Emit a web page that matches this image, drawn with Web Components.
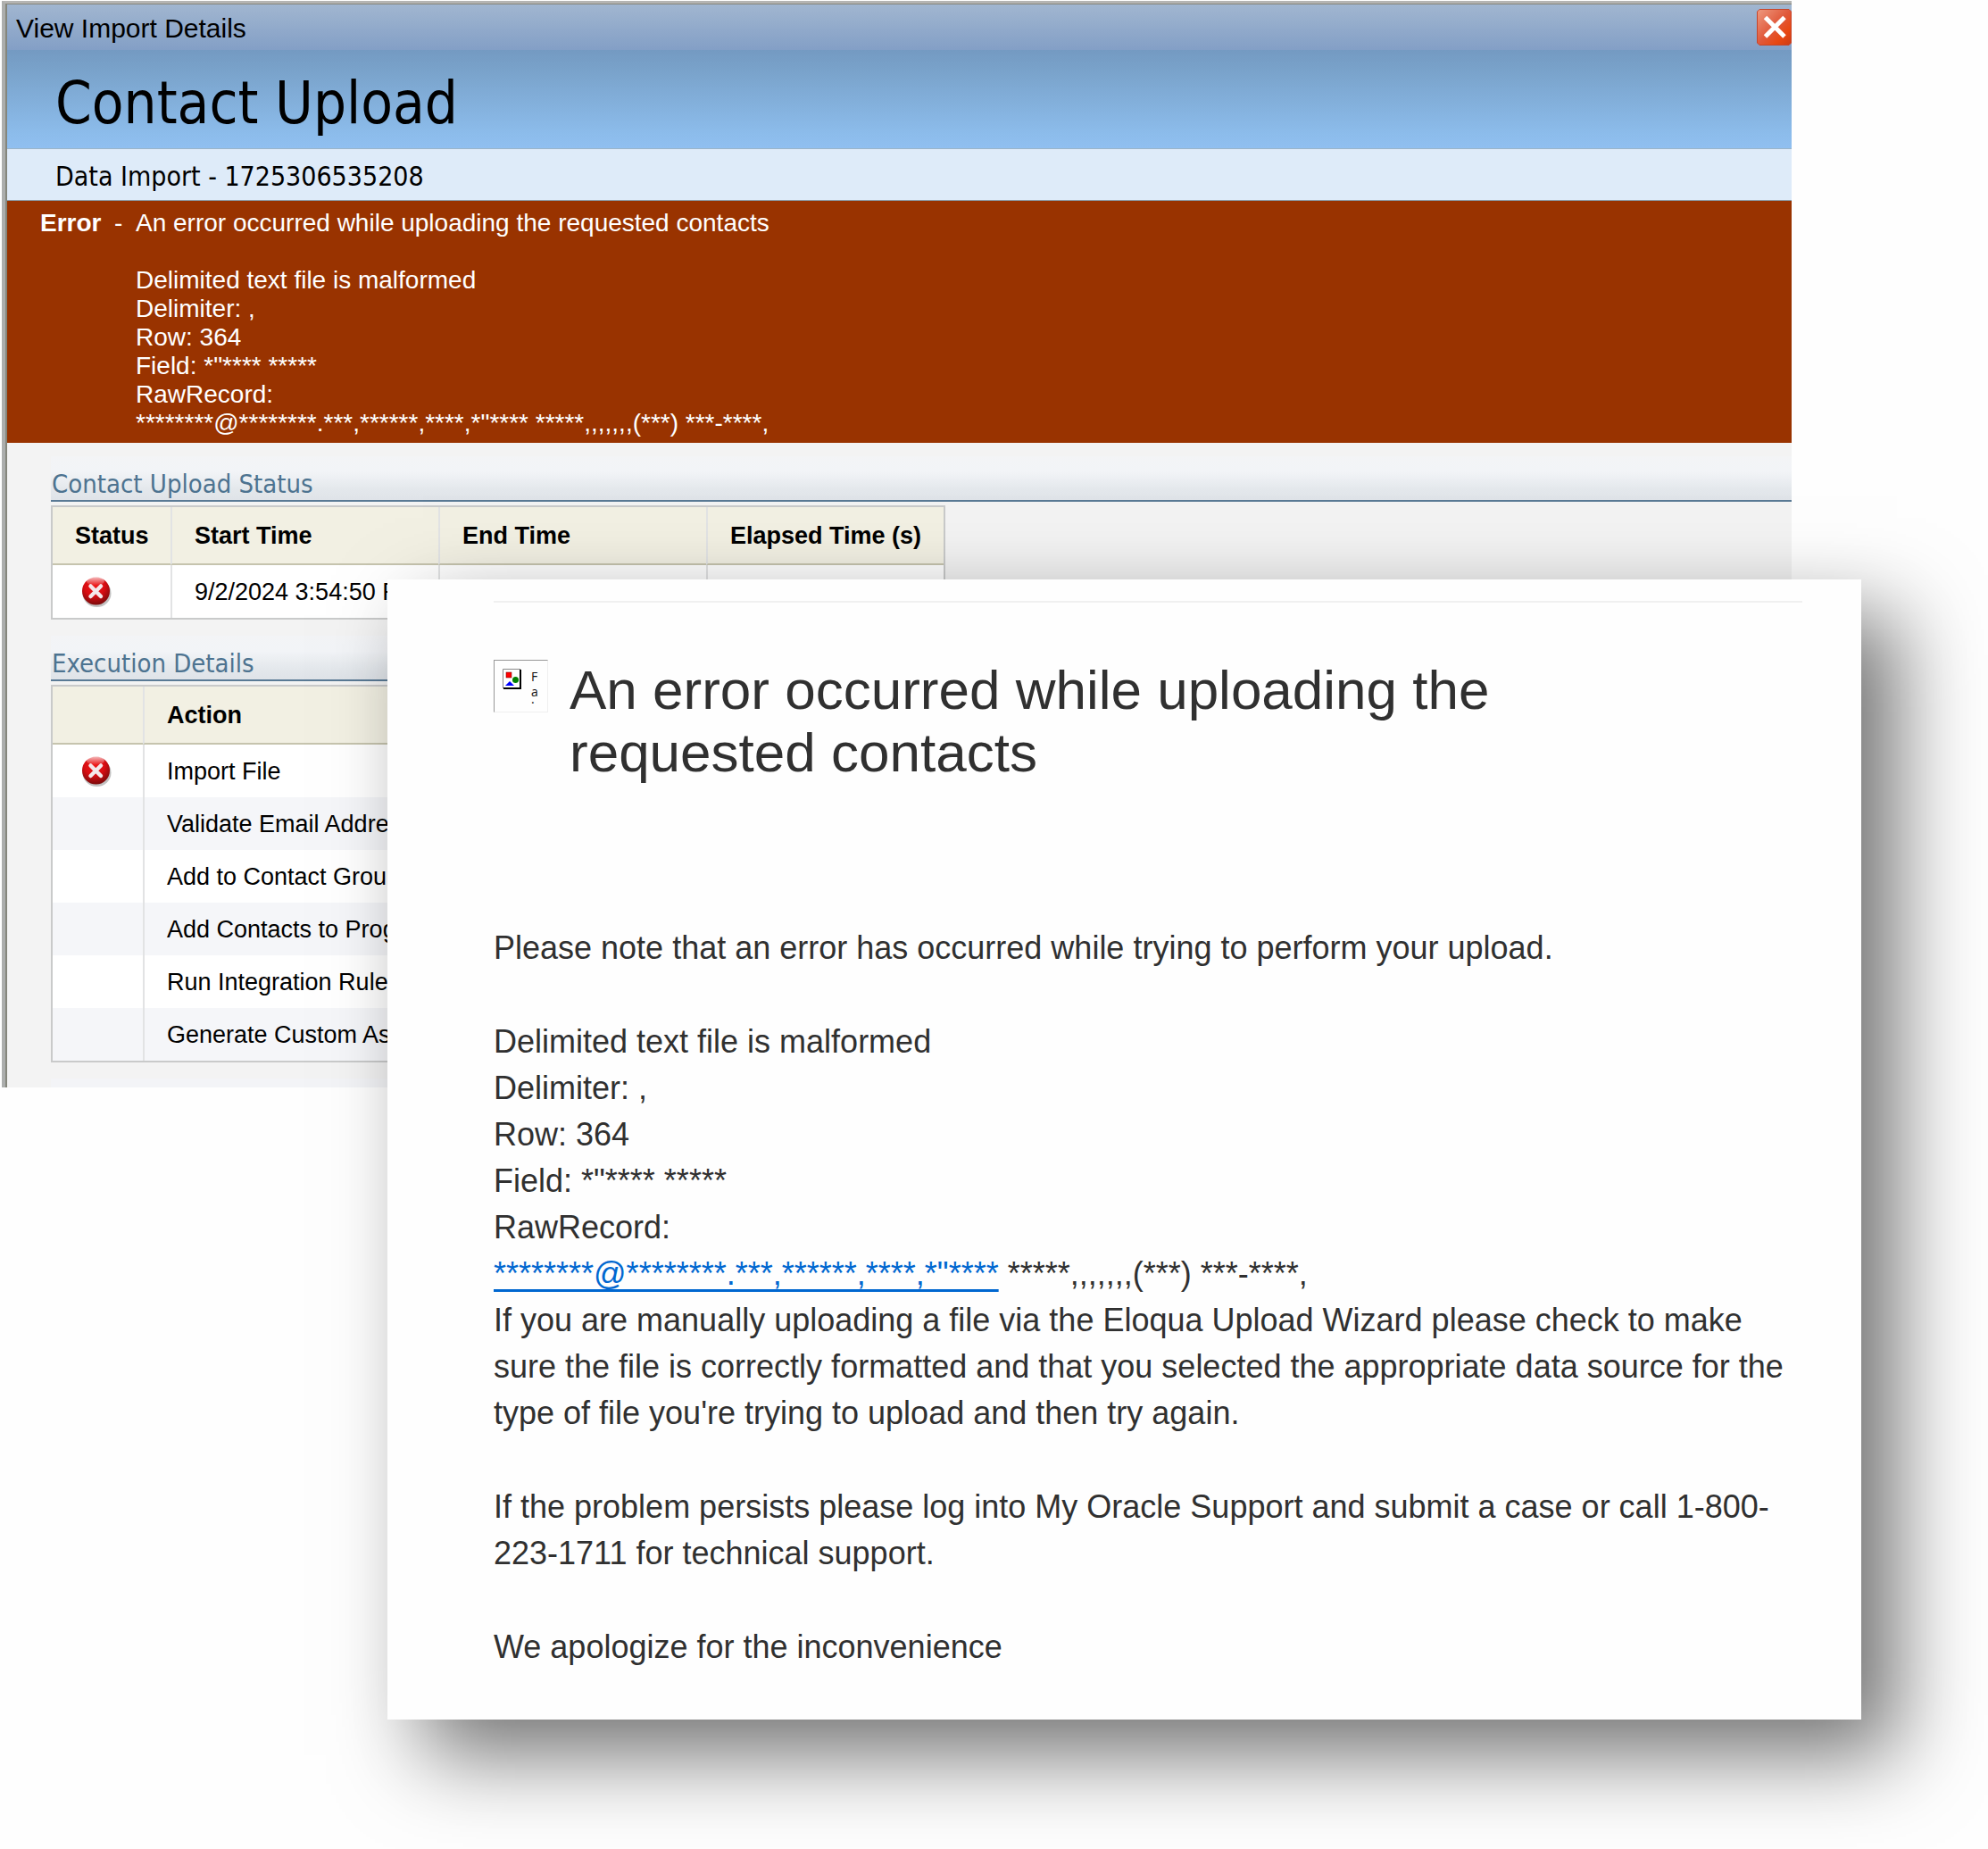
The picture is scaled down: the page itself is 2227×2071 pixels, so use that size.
<!DOCTYPE html>
<html lang="en">
<head>
<meta charset="utf-8">
<title>View Import Details</title>
<style>
  body { margin: 0; background: #fefefe; font-family: "Liberation Sans", Arial, sans-serif; color: #000; }
</style>
</head>
<body>
<import-page></import-page>

<template id="import-page">
  <style>
    :host { display: block; position: relative; min-height: 100vh; overflow: hidden; }
    import-dialog { margin: 1px 220px 0 2px; }
    error-card { position: absolute; top: 649px; left: 434px; right: 142px; }
  </style>
  <import-dialog>
    <span slot="title">View Import Details</span>
    <span slot="heading">Contact Upload</span>
    <span slot="name">Data Import - 1725306535208</span>
    <error-banner slot="banner"></error-banner>
    <section-block heading="Contact Upload Status"><status-table></status-table></section-block>
    <section-block heading="Execution Details"><action-table></action-table></section-block>
  </import-dialog>
  <error-card></error-card>
</template>

<template id="import-dialog">
  <style>
    :host { display: block; border-top: 3px solid #b4b4b2; border-left: 4px solid #acaead; }
    .frame { border-top: 1px solid #85847a; border-left: 2px solid #85867c; background: #f3f3f3; }
    .bar { display: flex; align-items: center; justify-content: space-between; height: 51px;
      padding-left: 10px; font-size: 30px; line-height: 34px; background: linear-gradient(#a1b6d0, #839fc6); }
    .bar ::slotted(span) { padding-top: 2px; }
    button { width: 39px; height: 41px; padding: 0; border: 0; background: none; }
    svg { display: block; }
    h1 { margin: 0; height: 111px; box-sizing: border-box; padding: 8px 0 0 54px; font: 65px/103px "DejaVu Sans Condensed", "DejaVu Sans", sans-serif;
      background: linear-gradient(#749ac2, #79a2ca 20%, #8cbceb 85%, #90bff0); border-bottom: 1px solid #9bb4c8; }
    .name { height: 58px; box-sizing: border-box; padding: 4px 0 0 54px; font: 30px/54px "DejaVu Sans Condensed", "DejaVu Sans", sans-serif;
      background: #deebf9; border-bottom: 1px solid #8b9ba6; }
    .body { padding: 15px 0 18px 49px; display: flex; flex-direction: column; gap: 18px; }
    .next { margin-left: 49px; height: 10px; background: #f3f4f7; }
  </style>
  <div class="frame">
    <div class="bar"><slot name="title"></slot>
      <button type="button" aria-label="Close">
        <svg width="39" height="41" viewBox="0 0 39 41">
          <defs><linearGradient id="r" x1="0" y1="0" x2="1" y2="1"><stop offset="0" stop-color="#ee9a80"/><stop offset=".5" stop-color="#e0583a"/><stop offset=".75" stop-color="#e84712"/><stop offset="1" stop-color="#cc3a14"/></linearGradient></defs>
          <path d="M3 .5H36L38.500 3V38L36 40.500H3L.5 38V3Z" fill="url(#r)" stroke="#c4452c"/>
          <path d="M9.500 9.500L31 31M31 9.500L9.500 31" stroke="#fff" stroke-width="5" fill="none"/>
        </svg>
      </button>
    </div>
    <h1><slot name="heading"></slot></h1>
    <div class="name"><slot name="name"></slot></div>
    <slot name="banner"></slot>
    <div class="body"><slot></slot></div>
    <div class="next"></div>
  </div>
</template>

<template id="error-banner">
  <style>
    :host { display: flex; padding: 9px 37px 6px; background: #993300; color: #fff; font-size: 28px; line-height: 32px; }
    b { width: 83px; }
    .dash { width: 24px; }
    p { margin: 0; }
    p + p { margin-top: 32px; }
  </style>
  <b>Error</b><span class="dash">-</span>
  <div>
    <p>An error occurred while uploading the requested contacts</p>
    <p>Delimited text file is malformed<br>Delimiter: ,<br>Row: 364<br>Field: *"**** *****<br>RawRecord:<br>********@********.***,******,****,*"**** *****,,,,,,,(***) ***-****,</p>
  </div>
</template>

<template id="section-block">
  <style>
    :host { display: block; }
    h2 { margin: 0 0 4px; height: 51px; box-sizing: border-box; padding: 13px 0 0 1px; font: 29px/36px "DejaVu Sans Condensed", "DejaVu Sans", sans-serif;
      color: #4d7390; background: linear-gradient(#f3f4f6, #f2f4f7 35%, #e4e8ec 75%, #dfe3e8); border-bottom: 2px solid #5a7a95; }
  </style>
  <h2></h2>
  <slot></slot>
</template>

<template id="table-styles">
  <style>
    :host { display: block; }
    table { border-collapse: separate; border-spacing: 0; table-layout: fixed; border: 2px solid #c9caca; background: #fff; font-size: 27px; line-height: 32px; }
    th, td { box-sizing: border-box; padding: 0 25px; text-align: left; white-space: nowrap; border-left: 2px solid #e2e3e4; }
    th:first-child, td:first-child { border-left: 0; }
    th { height: 65px; background: #f2f0e3; border-bottom: 2px solid #c6c4ae; }
    .icon { padding: 0 0 0 32px; }
  </style>
</template>

<template id="status-table">
  <style>
    table { width: 1002px; }
    td { height: 59px; }
  </style>
  <table>
    <colgroup><col style="width:132px"><col style="width:300px"><col style="width:300px"><col></colgroup>
    <thead><tr><th>Status</th><th>Start Time</th><th>End Time</th><th>Elapsed Time (s)</th></tr></thead>
    <tbody><tr><td class="icon"><fail-icon></fail-icon></td><td>9/2/2024 3:54:50 PM</td><td></td><td></td></tr></tbody>
  </table>
</template>

<template id="action-table">
  <style>
    table { width: 1002px; }
    td { height: 59px; }
    tr:nth-child(even) td { background: #f5f6f9; }
  </style>
  <table>
    <colgroup><col style="width:101px"><col></colgroup>
    <thead><tr><th></th><th>Action</th></tr></thead>
    <tbody>
      <tr><td class="icon"><fail-icon></fail-icon></td><td>Import File</td></tr>
      <tr><td></td><td>Validate Email Addresses</td></tr>
      <tr><td></td><td>Add to Contact Group</td></tr>
      <tr><td></td><td>Add Contacts to Program</td></tr>
      <tr><td></td><td>Run Integration Rules</td></tr>
      <tr><td></td><td>Generate Custom Assets</td></tr>
    </tbody>
  </table>
</template>

<template id="fail-icon">
  <style>:host { display: block; } svg { display: block; }</style>
  <svg width="34" height="36" viewBox="0 0 34 36" role="img" aria-label="Failed">
    <defs>
      <radialGradient id="g" cx=".45" cy=".3" r=".75"><stop offset="0" stop-color="#f01818"/><stop offset=".5" stop-color="#d80d12"/><stop offset="1" stop-color="#6e0a0a"/></radialGradient>
      <linearGradient id="h" x1="0" y1="0" x2="0" y2="1"><stop offset="0" stop-color="#fff" stop-opacity=".75"/><stop offset="1" stop-color="#fff" stop-opacity="0"/></linearGradient>
    </defs>
    <ellipse cx="17.500" cy="19.500" rx="16" ry="15.500" fill="#777" opacity=".45"/>
    <circle cx="16.500" cy="17" r="15.500" fill="url(#g)"/>
    <ellipse cx="16" cy="6" rx="10" ry="5" fill="url(#h)"/>
    <path d="M10.500 11.500L22 23M22 11.500L10.500 23" stroke="#f4e8ea" stroke-width="4.500" stroke-linecap="round"/>
  </svg>
</template>

<template id="error-card">
  <style>
    :host { display: block; box-sizing: border-box; padding: 24px 66px 55px 119px; background: #fefefe; color: #303030;
      box-shadow: 40px 40px 90px rgba(0,0,0,.55); font-size: 36px; line-height: 52px; }
    hr { margin: 0 0 63px; border: 0; height: 2px; background: #f0f0f0; }
    header { display: flex; align-items: flex-start; gap: 24px; margin-bottom: 158px; }
    h2 { flex: 1; margin: 0; padding-right: 90px; font-size: 62px; line-height: 70px; font-weight: 400; }
    p { margin: 0 0 53px; }
    p:last-child { margin: 0; }
    a { color: #0067d0; text-decoration-thickness: 3px; text-underline-offset: 5px; text-decoration-skip-ink: none; }
  </style>
  <hr>
  <header>
    <missing-image></missing-image>
    <h2>An error occurred while uploading the requested contacts</h2>
  </header>
  <p>Please note that an error has occurred while trying to perform your upload.</p>
  <p>Delimited text file is malformed<br>Delimiter: ,<br>Row: 364<br>Field: *"**** *****<br>RawRecord:<br><a href="#record">********@********.***,******,****,*"****</a> *****,,,,,,,(***) ***-****,<br>If you are manually uploading a file via the Eloqua Upload Wizard please check to make sure the file is correctly formatted and that you selected the appropriate data source for the type of file you're trying to upload and then try again.</p>
  <p>If the problem persists please log into My Oracle Support and submit a case or call 1-800-<wbr>223-1711 for technical support.</p>
  <p>We apologize for the inconvenience</p>
</template>

<template id="missing-image">
  <style>
    :host { display: flex; box-sizing: border-box; width: 61px; height: 59px; margin-top: 1px; padding: 9px 9px 6px; gap: 11px;
      border: 1px solid #efefef; border-top-color: #989898; border-left-color: #989898; background: #fefefe; }
    svg { flex: none; }
    div { display: flex; flex-direction: column; font: 14px/17px "Open Sans", sans-serif; color: #111; }
    span:last-child { line-height: 8px; }
  </style>
  <svg width="21" height="23" viewBox="0 0 21 23" aria-hidden="true">
    <path d="M.5 22V.5H20" fill="#fff" stroke="#888"/>
    <path d="M1 22H20V1" fill="none" stroke="#000" stroke-width="2"/>
    <rect x="4" y="4" width="6" height="6" fill="#f00" stroke="#600" stroke-width=".5"/>
    <circle cx="14.500" cy="12.500" r="3.500" fill="#008000"/>
    <path d="M3 19L8 14L13 19Z" fill="#00f"/>
  </svg>
  <div><span>F</span><span>a</span><span>·</span></div>
</template>

<script>
  const clone = id => document.getElementById(id).content.cloneNode(true);

  function define(name, ...extra) {
    customElements.define(name, class extends HTMLElement {
      constructor() {
        super();
        this.attachShadow({ mode: "open" }).append(...extra.map(clone), clone(name));
      }
    });
  }

  class SectionBlock extends HTMLElement {
    constructor() {
      super();
      this.attachShadow({ mode: "open" }).append(clone("section-block"));
    }
    connectedCallback() {
      this.shadowRoot.querySelector("h2").textContent = this.getAttribute("heading");
    }
  }

  define("fail-icon");
  define("missing-image");
  define("error-banner");
  define("status-table", "table-styles");
  define("action-table", "table-styles");
  customElements.define("section-block", SectionBlock);
  define("import-dialog");
  define("error-card");
  define("import-page");
</script>
</body>
</html>
